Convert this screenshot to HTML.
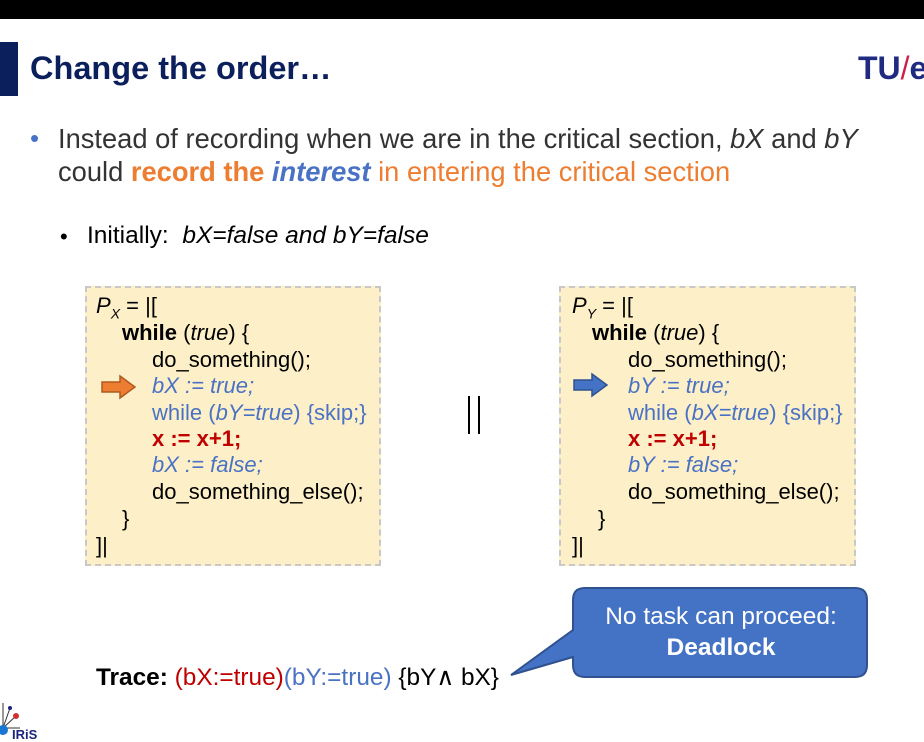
<!DOCTYPE html>
<html><head><style>
body{margin:0;width:924px;height:737px;background:#fff;position:relative;overflow:hidden;font-family:"Liberation Sans",sans-serif}
.a{position:absolute;white-space:nowrap}
.box{position:absolute;background:#fdf0c8;border:2px dashed #c8c8c8;box-sizing:border-box}
.l{position:absolute;font-size:22px;white-space:nowrap;color:#000}
.bl{color:#4a72c4}
.rd{color:#c00000;font-weight:bold}
</style></head><body>
<div class="a" style="left:0;top:0;width:924px;height:19px;background:#000"></div>
<div class="a" style="left:0;top:42px;width:18px;height:54px;background:#0b1f5c"></div>
<div class="a" style="left:30px;top:50px;font-size:32.5px;font-weight:bold;color:#0b1f5c">Change the order…</div>
<div class="a" style="left:858px;top:50px;font-size:32px;font-weight:bold;color:#1f2a80">TU<span style="color:#d0204a;font-weight:normal">/</span>e</div>
<div class="a" style="left:30px;top:123px;font-size:26px;color:#4a72c4">•</div>
<div class="a" style="left:58px;top:122px;font-size:27.3px;color:#333;line-height:33px">Instead of recording when we are in the critical section, <i>bX</i> and <i>bY</i><br>could <b style="color:#ed7d31">record the </b><b style="color:#4a72c4"><i>interest</i></b><span style="color:#ed7d31"> in entering the critical section</span></div>
<div class="a" style="left:60px;top:224px;font-size:22px;color:#000">•</div>
<div class="a" style="left:87px;top:222px;font-size:24.5px;color:#000">Initially:&nbsp; <i>bX=false and bY=false</i></div>

<div class="box" style="left:85px;top:286px;width:296px;height:280px"></div>
<div class="l" style="left:96px;top:293px"><i>P<sub style="font-size:14px">X</sub></i> = |[</div>
<div class="l" style="left:122px;top:320px"><b>while</b> (<i>true</i>) {</div>
<div class="l" style="left:152px;top:347px">do_something();</div>
<div class="l bl" style="left:152px;top:373px"><i>bX := true;</i></div>
<div class="l bl" style="left:152px;top:400px">while (<i>bY=true</i>) {skip;}</div>
<div class="l rd" style="left:152px;top:426px">x := x+1;</div>
<div class="l bl" style="left:152px;top:452px"><i>bX := false;</i></div>
<div class="l" style="left:152px;top:479px">do_something_else();</div>
<div class="l" style="left:122px;top:506px">}</div>
<div class="l" style="left:96px;top:533px">]|</div>
<svg class="a" style="left:100px;top:374px" width="38" height="26"><path d="M2 8H20V2L35 13L20 24V18H2Z" fill="#ed7d31" stroke="#ae5a21" stroke-width="1.5"/></svg>

<div class="a" style="left:468px;top:396px;width:2px;height:38px;background:#000"></div>
<div class="a" style="left:478px;top:396px;width:2px;height:38px;background:#000"></div>

<div class="box" style="left:559px;top:286px;width:297px;height:280px"></div>
<div class="l" style="left:572px;top:293px"><i>P<sub style="font-size:14px">Y</sub></i> = |[</div>
<div class="l" style="left:592px;top:320px"><b>while</b> (<i>true</i>) {</div>
<div class="l" style="left:628px;top:347px">do_something();</div>
<div class="l bl" style="left:628px;top:373px"><i>bY := true;</i></div>
<div class="l bl" style="left:628px;top:400px">while (<i>bX=true</i>) {skip;}</div>
<div class="l rd" style="left:628px;top:426px">x := x+1;</div>
<div class="l bl" style="left:628px;top:452px"><i>bY := false;</i></div>
<div class="l" style="left:628px;top:479px">do_something_else();</div>
<div class="l" style="left:598px;top:506px">}</div>
<div class="l" style="left:572px;top:533px">]|</div>
<svg class="a" style="left:572px;top:372px" width="38" height="26"><path d="M2 8H20V2L35 13L20 24V18H2Z" fill="#4472c4" stroke="#2f528f" stroke-width="1.5"/></svg>

<svg class="a" style="left:505px;top:585px" width="370" height="100"><path d="M80 3H350Q362 3 362 15V80Q362 92 350 92H80Q68 92 68 80V72L6 90L68 45V15Q68 3 80 3Z" fill="#4472c4" stroke="#2f528f" stroke-width="2"/></svg>
<div class="a" style="left:574px;top:601px;width:294px;text-align:center;font-size:24.5px;color:#fff;line-height:31px">No task can proceed:<br><b>Deadlock</b></div>

<div class="a" style="left:96px;top:662px;font-size:24.4px"><b>Trace:</b> <span style="color:#c00000">(bX:=true)</span><span style="color:#4a72c4">(bY:=true)</span> {bY∧ bX}</div>

<svg class="a" style="left:0;top:700px" width="40" height="37"><g stroke="#333" stroke-width="1"><path d="M3 28L3 3M3 28L10 8M3 28L16 16M3 28L20 28"/></g><circle cx="3" cy="30" r="5" fill="#1976d2"/><circle cx="16" cy="16" r="3" fill="#d32f2f"/><circle cx="10" cy="8" r="2" fill="#1a237e"/></svg>
<div class="a" style="left:12px;top:727px;font-size:13px;color:#1a237e;font-weight:bold">IRiS</div>
</body></html>
